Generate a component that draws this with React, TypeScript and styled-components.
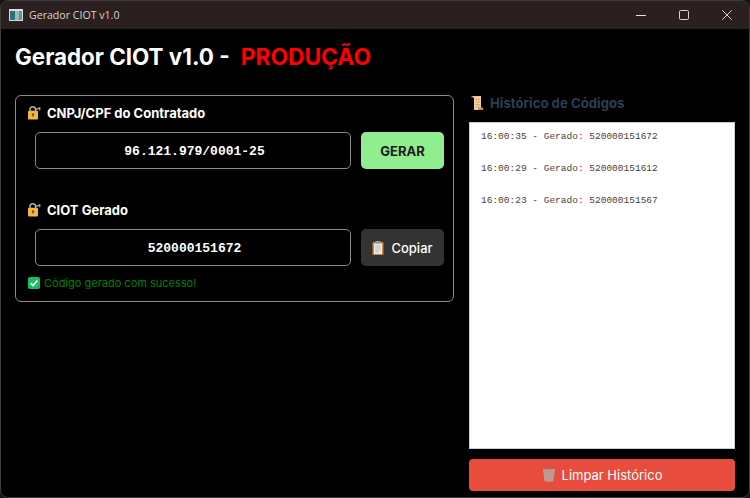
import React from 'react';
import styled, { createGlobalStyle } from 'styled-components';

const GlobalStyle = createGlobalStyle`
	html, body {
		margin: 0;
		padding: 0;
		background: #141414;
	}
	* {
		box-sizing: border-box;
	}
`;

const Window = styled.div`
	width: 750px;
	height: 498px;
	display: flex;
	flex-direction: column;
	background: #000;
	border: 1px solid #3c3c3c;
	border-radius: 8px;
	overflow: hidden;
	font-family: Inter, 'Noto Sans', sans-serif;
	color: #fff;
`;

const TitleBar = styled.div`
	height: 28px;
	flex: none;
	display: flex;
	align-items: center;
	background: #2c1f1f;
	padding-left: 8px;
`;

const TitleText = styled.span`
	margin-left: 6px;
	font-size: 10.6px;
	font-family: 'Open Sans', 'Noto Sans', sans-serif;
	color: #d8d4d4;
`;

const WindowControls = styled.div`
	margin-left: auto;
	display: flex;
	height: 100%;
	padding-right: 1px;
`;

const WindowControl = styled.div`
	width: 43px;
	display: flex;
	align-items: center;
	justify-content: center;
`;

const Content = styled.div`
	flex: 1;
	display: flex;
	flex-direction: column;
	padding: 14px 14px 6px;
	min-height: 0;
`;

const Header = styled.h1`
	margin: 0;
	height: 28px;
	display: flex;
	align-items: center;
	gap: 11px;
	font-size: 22.4px;
	line-height: 28px;
	font-weight: 700;
`;

const Production = styled.span`
	color: #ff0000;
	font-size: 22.8px;
`;

const Columns = styled.div`
	flex: 1;
	display: flex;
	gap: 15px;
	margin-top: 24px;
	min-height: 0;
`;

const Card = styled.section`
	width: 439px;
	height: 207px;
	flex: none;
	border: 1px solid #8a8a8a;
	border-radius: 6px;
	padding: 8px 9px 0 12px;
`;

const FieldLabel = styled.div<{ top?: string }>`
	display: flex;
	align-items: center;
	gap: 5px;
	height: 18px;
	margin-top: ${({ top }) => top || '0'};
	font-size: 13px;
	font-weight: 700;
`;

const FieldRow = styled.div`
	display: flex;
	gap: 10px;
	margin-top: 10px;
	padding-left: 7px;
`;

const Field = styled.input`
	width: 316px;
	height: 37px;
	background: #000;
	border: 1px solid #8a8a8a;
	border-radius: 5px;
	color: #fff;
	text-align: center;
	font-family: 'Liberation Mono', monospace;
	font-size: 13px;
	font-weight: 700;
	outline: none;
	padding: 2px 0 0 3px;
`;

const ActionButton = styled.button<{ bg: string; fg: string; weight?: number }>`
	width: 83px;
	height: 37px;
	display: flex;
	align-items: center;
	justify-content: center;
	gap: 7px;
	border: none;
	border-radius: 5px;
	background: ${({ bg }) => bg};
	color: ${({ fg }) => fg};
	font-family: Inter, sans-serif;
	font-size: 13px;
	font-weight: ${({ weight }) => weight || 500};
	padding: 0;
`;

const Status = styled.div`
	display: flex;
	align-items: center;
	gap: 4px;
	height: 16px;
	margin-top: 9px;
	font-size: 11px;
	color: #008000;
`;

const HistoryColumn = styled.section`
	flex: 1;
	display: flex;
	flex-direction: column;
	min-width: 0;
`;

const HistoryTitle = styled.div`
	display: flex;
	align-items: center;
	gap: 7px;
	height: 16px;
	padding-left: 2px;
	font-size: 13.2px;
	font-weight: 700;
	color: #2c3e50;
`;

const HistoryBox = styled.div`
	flex: 1;
	margin-top: 11px;
	background: #fff;
	border: 1px solid #c8ced6;
	padding: 7px 11px;
`;

const HistoryRow = styled.div`
	height: 32px;
	font-family: 'Liberation Mono', monospace;
	font-size: 9.5px;
	line-height: 13px;
	color: #444;
	white-space: pre;
`;

const ClearButton = styled.button`
	height: 32px;
	flex: none;
	margin-top: 10px;
	display: flex;
	align-items: center;
	justify-content: center;
	gap: 6px;
	border: none;
	border-radius: 4px;
	background: #e74c3c;
	color: #fff;
	font-family: Inter, sans-serif;
	font-size: 13px;
	font-weight: 400;
	padding: 0;
`;

function AppIcon() {
	return (
		<svg width="14" height="12" viewBox="0 0 14 12">
			<rect x="0" y="0" width="14" height="12" fill="#d6dde0" />
			<rect x="1" y="2" width="5" height="9" fill="#2f6f78" />
			<rect x="6" y="2" width="4" height="9" fill="#9fb6bd" />
			<rect x="10" y="2" width="3" height="9" fill="#4fa08e" />
		</svg>
	);
}

function LockIcon() {
	return (
		<svg width="14" height="14" viewBox="0 0 14 14">
			<path d="M2 5V3.6a2.8 2.8 0 0 1 5.6 0V5" fill="none" stroke="#b0b0b0" strokeWidth="1.5" />
			<path d="M7.4 3.6 L12.4 1.6 M11 1.5 L12 4" stroke="#a8a8a8" strokeWidth="1.4" fill="none" />
			<rect x="0" y="4.8" width="10" height="8.7" rx="1" fill="#f4b63f" />
			<circle cx="5" cy="8.4" r="1.2" fill="#6e4f14" />
			<rect x="4.5" y="8.4" width="1" height="2.4" fill="#6e4f14" />
		</svg>
	);
}

function ScrollIcon() {
	return (
		<svg width="12" height="14" viewBox="0 0 12 14">
			<path d="M0 1.5 Q0 0 2 0 H10 V12 Q10 14 8 14 H3 V2 Q2 1 0 1.5Z" fill="#f0b878" />
			<rect x="3" y="0.5" width="7" height="13" fill="#f3cf9f" />
			<path d="M4.5 3.5H9M4.5 6H9M4.5 8.5H9M4.5 11H9" stroke="#d9a262" strokeWidth="0.9" />
			<rect x="7" y="11.5" width="5" height="2.5" fill="#d98f48" />
		</svg>
	);
}

function ClipboardIcon() {
	return (
		<svg width="12" height="14" viewBox="0 0 12 14">
			<rect x="0.5" y="1" width="11" height="13" rx="1" fill="#c98545" />
			<rect x="2" y="2.5" width="8" height="10.5" fill="#f1ede6" />
			<rect x="3.5" y="0" width="5" height="2.6" rx="0.6" fill="#9a9a9a" />
			<path d="M3.2 5H8.8M3.2 7H8.8M3.2 9H8.8M3.2 11H7" stroke="#a9a9a9" strokeWidth="0.8" />
		</svg>
	);
}

function BasketIcon() {
	return (
		<svg width="14" height="14" viewBox="0 0 14 14">
			<path d="M1 1.5H13L11.4 13.5H2.6Z" fill="#b5a09c" />
			<path d="M2 4l8.5 9M5 2l7 7.5M9 2l3.4 3.6M12 4l-8.5 9M9 2L2 9.5M5 2L1.6 5.6" stroke="#dc8478" strokeWidth="0.6" fill="none" />
			<rect x="1" y="1" width="12" height="1.2" fill="#a0a0a0" />
		</svg>
	);
}

function CheckIcon() {
	return (
		<svg width="12" height="12" viewBox="0 0 12 12">
			<rect width="12" height="12" rx="2" fill="#16c060" />
			<path d="M2.6 6.2 5 8.6 9.4 3.6" fill="none" stroke="#fff" strokeWidth="1.7" />
		</svg>
	);
}

const history = ['16:00:35 - Gerado: 520000151672', '16:00:29 - Gerado: 520000151612', '16:00:23 - Gerado: 520000151567'];

export default function App() {
	return (
		<>
			<GlobalStyle />
			<Window>
				<TitleBar>
					<AppIcon />
					<TitleText>Gerador CIOT v1.0</TitleText>
					<WindowControls>
						<WindowControl>
							<svg width="10" height="10" viewBox="0 0 10 10">
								<path d="M0 5.5H10" stroke="#e6e2e2" strokeWidth="1" />
							</svg>
						</WindowControl>
						<WindowControl>
							<svg width="10" height="10" viewBox="0 0 10 10">
								<rect x="0.5" y="0.5" width="9" height="9" rx="1.2" fill="none" stroke="#d8d4d4" strokeWidth="1" />
							</svg>
						</WindowControl>
						<WindowControl>
							<svg width="10" height="10" viewBox="0 0 10 10">
								<path d="M0.3 0.3L9.7 9.7M9.7 0.3L0.3 9.7" stroke="#d8d4d4" strokeWidth="1" />
							</svg>
						</WindowControl>
					</WindowControls>
				</TitleBar>
				<Content>
					<Header>
						<span>Gerador CIOT v1.0 -</span>
						<Production>PRODUÇÃO</Production>
					</Header>
					<Columns>
						<Card>
							<FieldLabel>
								<LockIcon />
								CNPJ/CPF do Contratado
							</FieldLabel>
							<FieldRow>
								<Field readOnly value="96.121.979/0001-25" />
								<ActionButton bg="#90ee90" fg="#1c1c1c" weight={700}>
									GERAR
								</ActionButton>
							</FieldRow>
							<FieldLabel top="32px">
								<LockIcon />
								CIOT Gerado
							</FieldLabel>
							<FieldRow>
								<Field readOnly value="520000151672" />
								<ActionButton bg="#333333" fg="#ffffff">
									<ClipboardIcon />
									Copiar
								</ActionButton>
							</FieldRow>
							<Status>
								<CheckIcon />
								Código gerado com sucesso!
							</Status>
						</Card>
						<HistoryColumn>
							<HistoryTitle>
								<ScrollIcon />
								Histórico de Códigos
							</HistoryTitle>
							<HistoryBox>
								{history.map((line) => (
									<HistoryRow key={line}>{line}</HistoryRow>
								))}
							</HistoryBox>
							<ClearButton>
								<BasketIcon />
								Limpar Histórico
							</ClearButton>
						</HistoryColumn>
					</Columns>
				</Content>
			</Window>
		</>
	);
}
